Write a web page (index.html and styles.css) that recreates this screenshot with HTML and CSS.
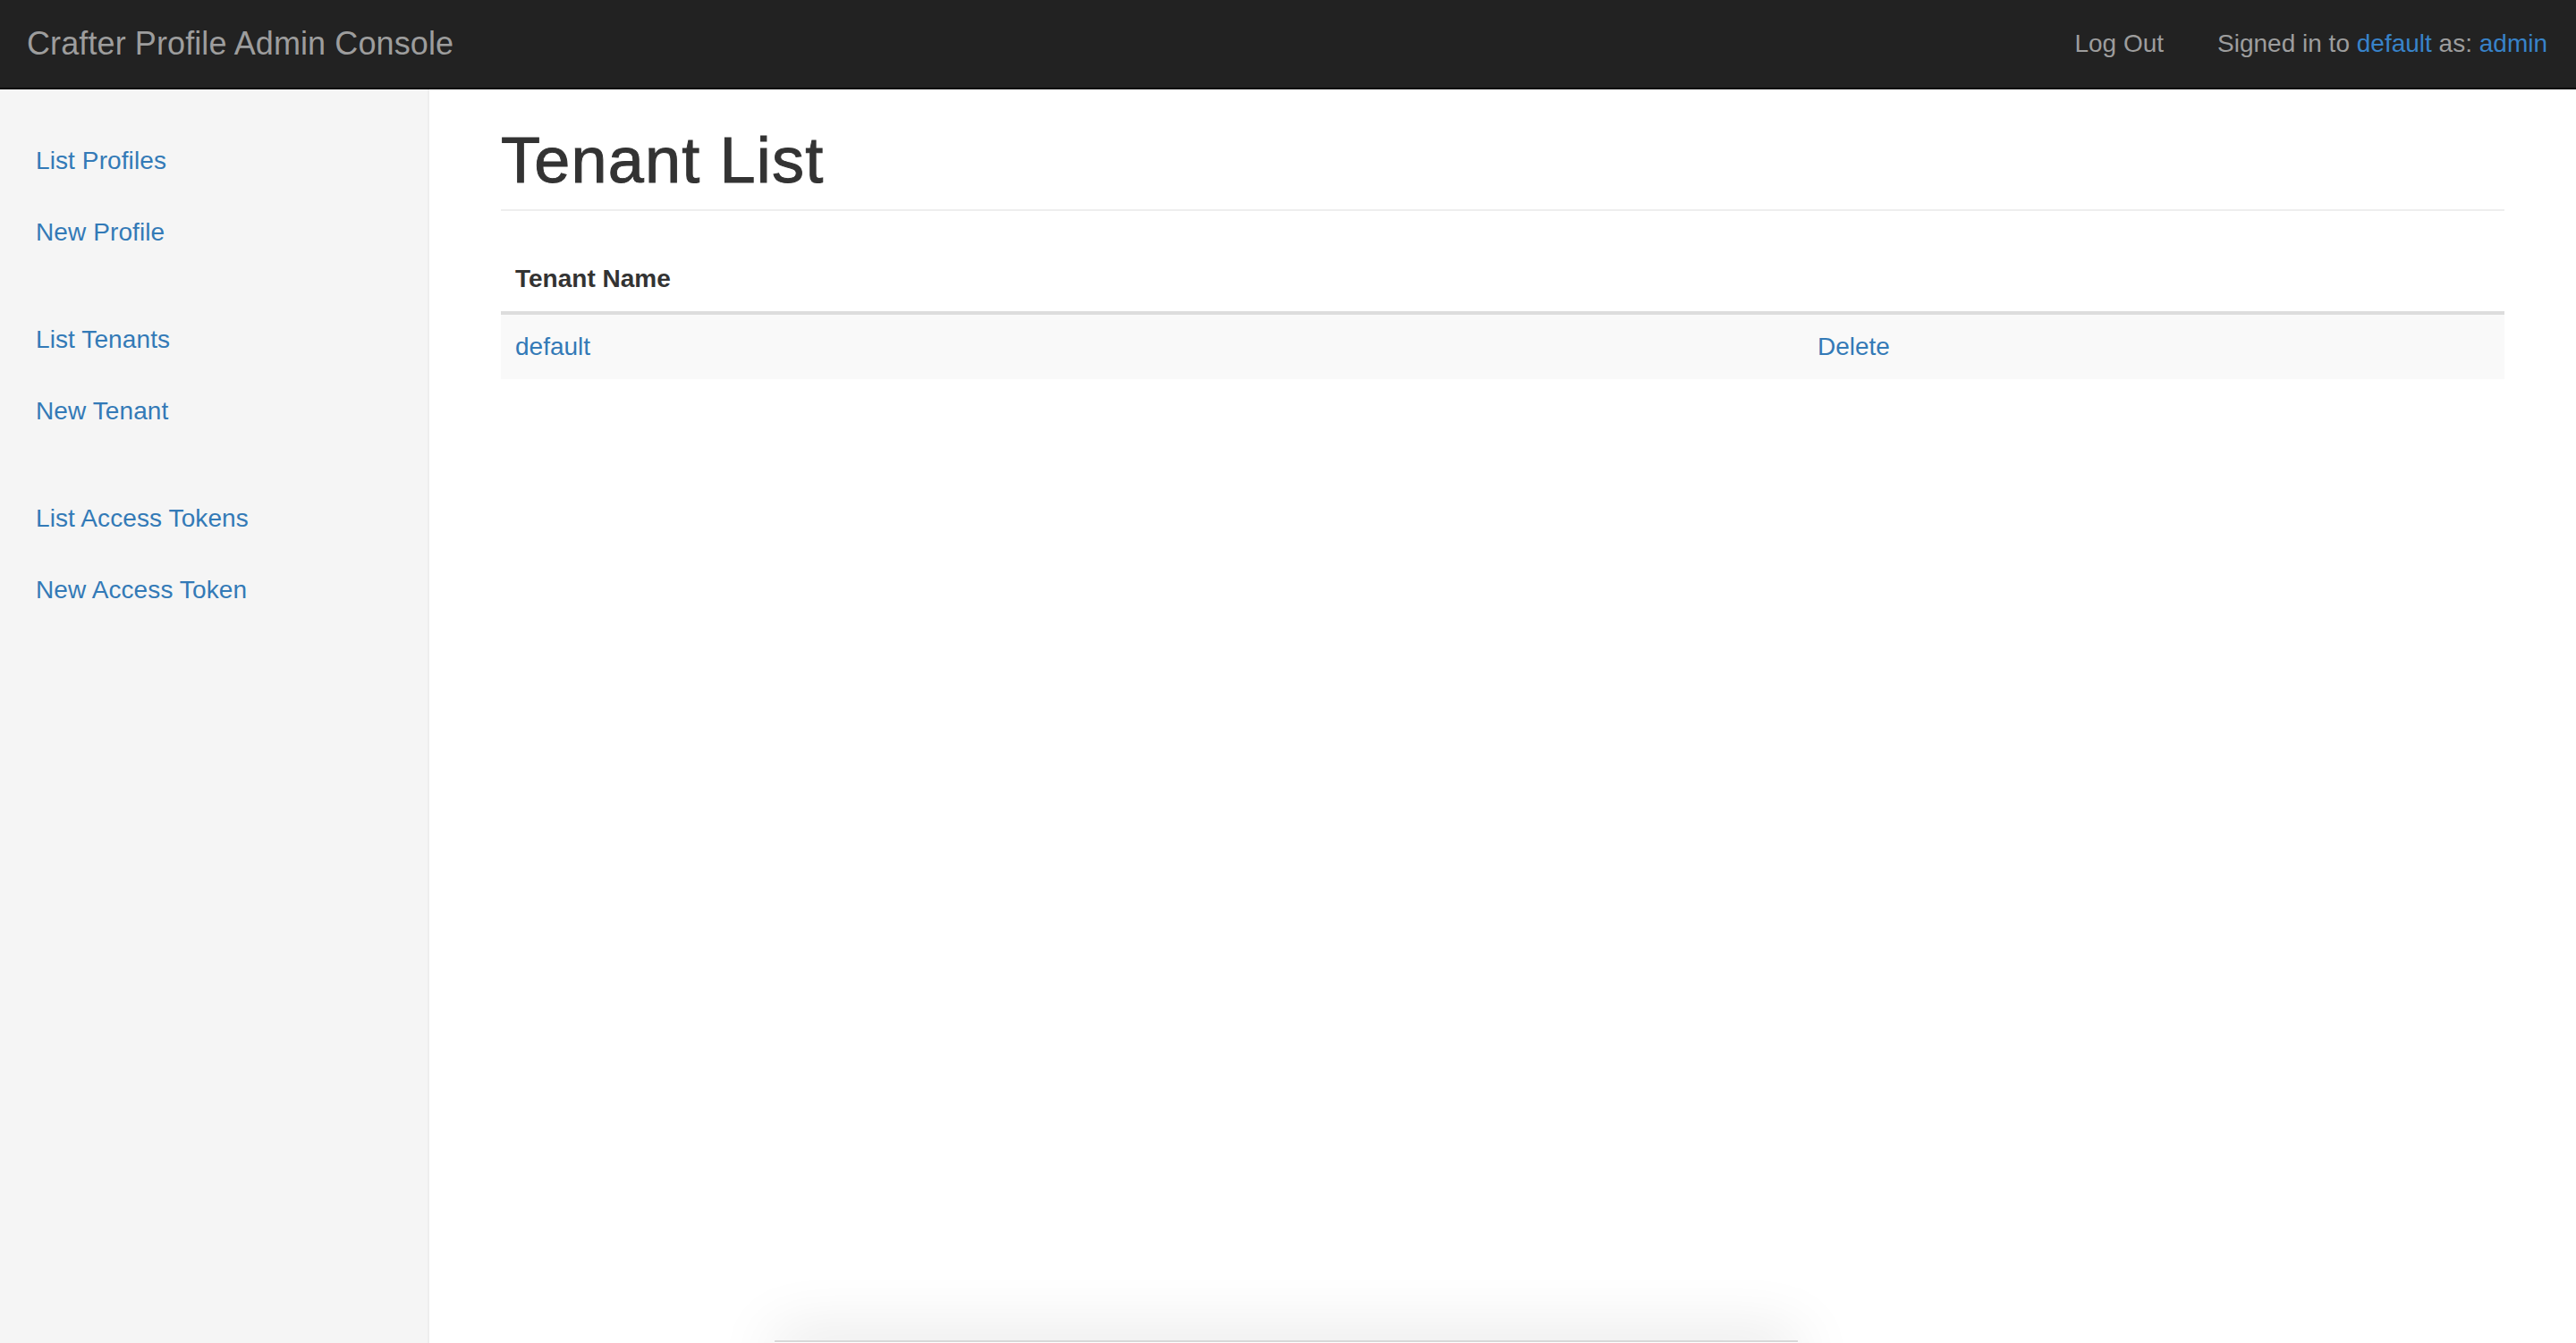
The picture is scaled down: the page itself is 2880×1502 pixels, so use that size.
FILE: index.html
```html
<!DOCTYPE html>
<html lang="en">
<head>
<meta charset="utf-8">
<title>Crafter Profile Admin Console</title>
<link rel="stylesheet" href="styles.css">
</head>
<body>
<header class="navbar">
  <a class="brand" href="#">Crafter Profile Admin Console</a>
  <div class="navbar-right">
    <a class="nav-link" href="#">Log Out</a>
    <p class="navbar-text">Signed in to <a href="#">default</a> as: <a href="#">admin</a></p>
  </div>
</header>
<div class="layout">
  <aside class="sidebar">
    <ul class="nav-sidebar">
      <li><a href="#">List Profiles</a></li>
      <li><a href="#">New Profile</a></li>
    </ul>
    <ul class="nav-sidebar">
      <li><a href="#">List Tenants</a></li>
      <li><a href="#">New Tenant</a></li>
    </ul>
    <ul class="nav-sidebar">
      <li><a href="#">List Access Tokens</a></li>
      <li><a href="#">New Access Token</a></li>
    </ul>
  </aside>
  <main class="main">
    <h1 class="page-header">Tenant List</h1>
    <table class="table">
      <thead>
        <tr><th class="col-name">Tenant Name</th><th></th></tr>
      </thead>
      <tbody>
        <tr><td><a href="#">default</a></td><td><a href="#">Delete</a></td></tr>
      </tbody>
    </table>
  </main>
</div>
<div class="bottom-popup"></div>
</body>
</html>
```

FILE: styles.css
```css
html, body {
  margin: 0;
  padding: 0;
}
body {
  font-family: "Liberation Sans", Helvetica, Arial, sans-serif;
  font-size: 28px;
  line-height: 40px;
  color: #333;
  background: #fff;
  overflow: hidden;
  height: 1502px;
}
a {
  color: #337ab7;
  text-decoration: none;
}
.navbar {
  height: 98px;
  background: #222;
  border-bottom: 2px solid #080808;
  display: flex;
  align-items: center;
  justify-content: space-between;
}
.brand {
  color: #9d9d9d;
  font-size: 36px;
  line-height: 40px;
  padding-left: 30px;
  letter-spacing: 0.1px;
}
.navbar-right {
  display: flex;
  align-items: center;
  padding-right: 32px;
}
.nav-link {
  color: #9d9d9d;
  padding: 0 30px;
}
.navbar-text {
  color: #9d9d9d;
  margin: 0 0 0 30px;
}
.navbar-text a {
  color: #3883c9;
}
.layout {
  display: flex;
  height: 1402px;
}
.sidebar {
  box-sizing: border-box;
  width: 480px;
  flex: 0 0 480px;
  background: #f5f5f5;
  border-right: 2px solid #eee;
  padding: 40px 0;
}
.nav-sidebar {
  list-style: none;
  margin: 0 0 40px 0;
  padding: 0;
}
.nav-sidebar a {
  display: block;
  padding: 20px 40px;
  letter-spacing: 0.1px;
}
.main {
  flex: 1;
  padding: 40px 80px;
}
.page-header {
  margin: 0 0 40px 0;
  font-size: 72px;
  line-height: 78px;
  font-weight: 500;
  letter-spacing: 1.2px;
  -webkit-text-stroke: 1px #333;
  padding-bottom: 16px;
  border-bottom: 2px solid #eee;
}
.table {
  width: 100%;
  border-collapse: collapse;
  border-spacing: 0;
}
.table th {
  text-align: left;
  font-weight: bold;
  padding: 16px;
  border-bottom: 4px solid #ddd;
}
.table .col-name {
  width: 65%;
}
.table td {
  padding: 16px;
  background: #f9f9f9;
}
.bottom-popup {
  position: fixed;
  left: 866px;
  width: 1144px;
  top: 1499px;
  height: 40px;
  background: #fff;
  border-top: 2px solid #d8d8d8;
  box-shadow: 0 -6px 70px rgba(0, 0, 0, 0.12);
}
```
